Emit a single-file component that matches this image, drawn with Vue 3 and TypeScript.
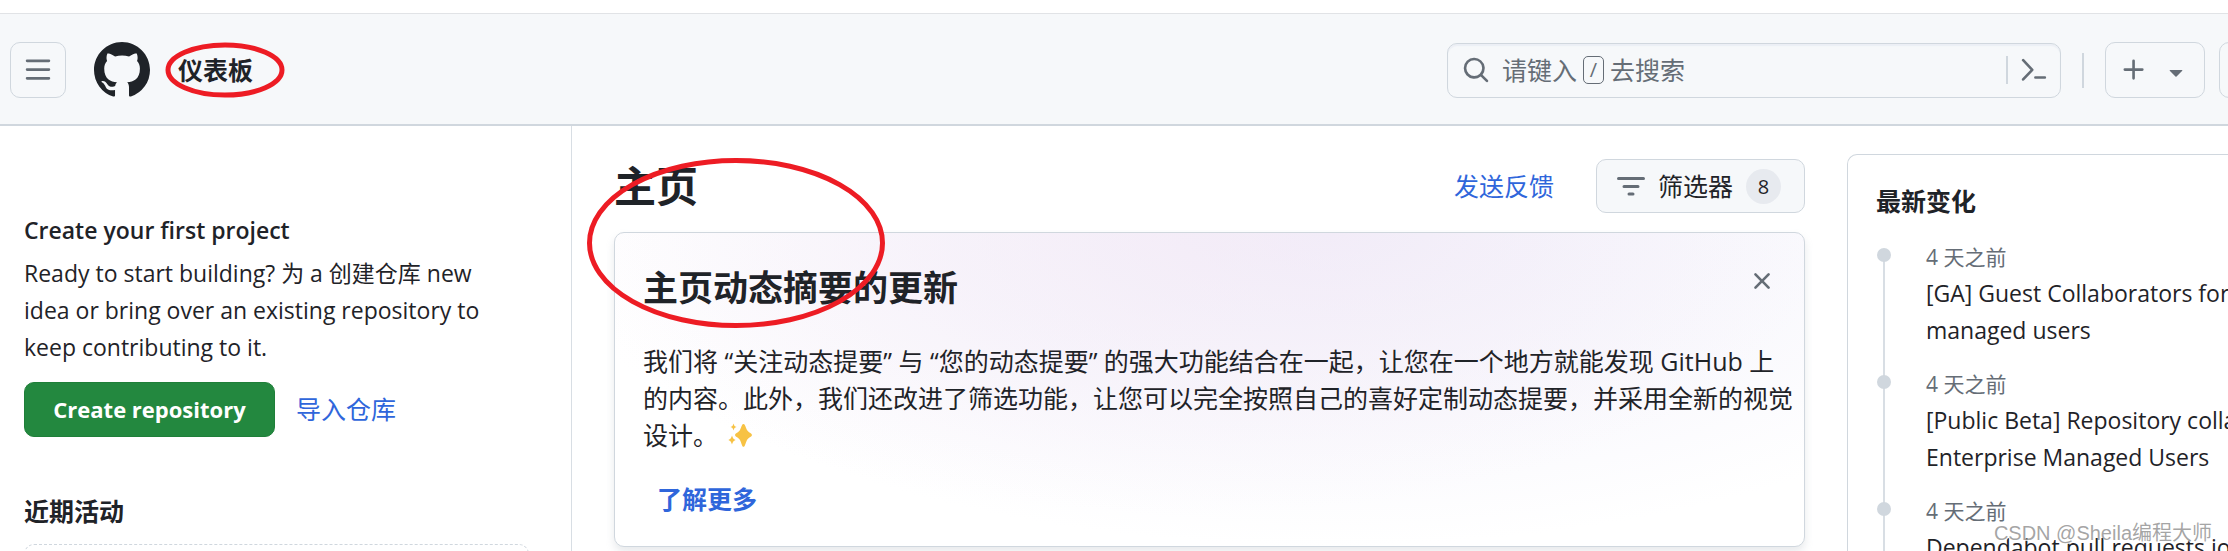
<script setup lang="ts">
interface Change {
  when: string
  lines: string[]
}

const changes: Change[] = [
  { when: '4 天之前', lines: ['[GA] Guest Collaborators for enterprise', 'managed users'] },
  { when: '4 天之前', lines: ['[Public Beta] Repository collaborators for', 'Enterprise Managed Users'] },
  { when: '4 天之前', lines: ['Dependabot pull requests jobs'] },
]
const filterCount = 8
</script>

<template>
  <div class="page">
    <header class="top">
      <button class="square" type="button" aria-label="菜单">
        <svg width="28" height="28" viewBox="0 0 16 16"><path fill="currentColor" d="M1 2.75A.75.75 0 0 1 1.75 2h12.5a.75.75 0 0 1 0 1.5H1.75A.75.75 0 0 1 1 2.75Zm0 5A.75.75 0 0 1 1.75 7h12.5a.75.75 0 0 1 0 1.5H1.75A.75.75 0 0 1 1 7.75ZM1.75 12h12.5a.75.75 0 0 1 0 1.5H1.75a.75.75 0 0 1 0-1.5Z" /></svg>
      </button>
      <a class="logo" href="#" aria-label="GitHub">
        <svg width="56" height="56" viewBox="0 0 16 16"><path fill="currentColor" d="M8 0c4.42 0 8 3.58 8 8a8.013 8.013 0 0 1-5.45 7.59c-.4.08-.55-.17-.55-.38 0-.27.01-1.13.01-2.2 0-.75-.25-1.23-.54-1.48 1.78-.2 3.65-.88 3.65-3.95 0-.88-.31-1.59-.82-2.15.08-.2.36-1.02-.08-2.12 0 0-.67-.22-2.2.82-.64-.18-1.32-.27-2-.27-.68 0-1.36.09-2 .27-1.53-1.03-2.2-.82-2.2-.82-.44 1.1-.16 1.92-.08 2.12-.51.56-.82 1.28-.82 2.15 0 3.06 1.86 3.75 3.64 3.95-.23.2-.44.55-.51 1.07-.46.21-1.61.55-2.33-.66-.15-.24-.6-.83-1.23-.82-.67.01-.27.38.01.53.34.19.73.9.82 1.13.16.45.68 1.31 2.69.94 0 .67.01 1.3.01 1.49 0 .21-.15.45-.55.38A7.995 7.995 0 0 1 0 8c0-4.42 3.58-8 8-8Z" /></svg>
      </a>
      <a class="context" href="#">仪表板
        <svg class="ring ring-small" viewBox="0 0 120 56"><ellipse cx="60" cy="28" rx="57" ry="25" /></svg>
      </a>
      <div class="search">
        <button class="search-main" type="button">
          <svg width="28" height="28" viewBox="0 0 16 16"><path fill="currentColor" d="M10.68 11.74a6 6 0 0 1-7.922-8.982 6 6 0 0 1 8.982 7.922l3.04 3.04a.749.749 0 0 1-.326 1.275.749.749 0 0 1-.734-.215ZM11.5 7a4.499 4.499 0 1 0-8.997 0A4.499 4.499 0 0 0 11.5 7Z" /></svg>
          <span class="hint">请键入 <kbd>/</kbd> 去搜索</span>
        </button>
        <button class="command" type="button" aria-label="命令面板">
          <svg width="28" height="28" viewBox="0 0 16 16" fill="none" stroke="currentColor" stroke-width="1.5" stroke-linecap="round" stroke-linejoin="round"><path d="M1.8 2.4 7 7.9l-5.2 5.5M8.8 12.3h5.4" /></svg>
        </button>
      </div>
      <span class="bar"></span>
      <button class="create" type="button" aria-label="新建">
        <svg width="28" height="28" viewBox="0 0 16 16"><path fill="currentColor" d="M7.75 2a.75.75 0 0 1 .75.75V7h4.25a.75.75 0 0 1 0 1.5H8.5v4.25a.75.75 0 0 1-1.5 0V8.5H2.75a.75.75 0 0 1 0-1.5H7V2.75A.75.75 0 0 1 7.75 2Z" /></svg>
        <svg width="28" height="28" viewBox="0 0 16 16"><path fill="currentColor" d="m4.427 8.427 3.396 3.396a.25.25 0 0 0 .354 0l3.396-3.396A.25.25 0 0 0 11.396 8H4.604a.25.25 0 0 0-.177.427Z" /></svg>
      </button>
      <button class="square issues" type="button" aria-label="议题"></button>
    </header>

    <div class="columns">
      <aside class="side">
        <h2 class="start">Create your first project</h2>
        <p class="intro">Ready to start building? 为 a 创建仓库 new idea or bring over an existing repository to keep contributing to it.</p>
        <div class="actions">
          <button class="primary" type="button">Create repository</button>
          <a href="#">导入仓库</a>
        </div>
        <h2 class="recent">近期活动</h2>
        <div class="empty"></div>
      </aside>

      <main class="feed">
        <div class="feed-head">
          <h1>主页</h1>
          <a href="#">发送反馈</a>
          <button class="filter" type="button">
            <svg width="28" height="28" viewBox="0 0 28 28" stroke="currentColor" stroke-width="3" stroke-linecap="round"><path d="M1.5 6.500h25M7 14.500h14M12 22h4" /></svg>
            <span>筛选器</span>
            <span class="count">{{ filterCount }}</span>
          </button>
        </div>
        <section class="notice">
          <svg class="ring ring-large" viewBox="0 0 298 170"><ellipse cx="149" cy="85" rx="146.500" ry="82.500" /></svg>
          <div class="notice-head">
            <h2>主页动态摘要的更新</h2>
            <button class="close" type="button" aria-label="关闭">
              <svg width="28" height="28" viewBox="0 0 16 16"><path fill="currentColor" d="M3.72 3.72a.75.75 0 0 1 1.06 0L8 6.94l3.220-3.220a.749.749 0 0 1 1.275.326.749.749 0 0 1-.215.734L9.060 8l3.220 3.220a.749.749 0 0 1-.326 1.275.749.749 0 0 1-.734-.215L8 9.060l-3.220 3.220a.751.751 0 0 1-1.042-.018.751.751 0 0 1-.018-1.042L6.940 8 3.720 4.780a.75.75 0 0 1 0-1.060Z" /></svg>
            </button>
          </div>
          <p>
            我们将 “关注动态提要” 与 “您的动态提要” 的强大功能结合在一起，让您在一个地方就能发现 GitHub 上<br>的内容。此外，我们还改进了筛选功能，让您可以完全按照自己的喜好定制动态提要，并采用全新的视觉<br>设计。
            <svg class="sparkle" width="26" height="26" viewBox="0 0 26 26" fill="#f7c244"><path d="M16 2c2-.8 2.500 3 4 6 1.200 2.400 5 3.300 5 5s-3.800 2.600-5 5c-1.500 3-2 6.800-3.500 6.800S14.500 21 13 18c-1.200-2.400-5-3.300-5-5s3.800-2.600 5-5c1.500-3 1.800-5.500 3-6ZM6.500 1.500c.8 2.500 1 2.800 3 3.500-2 .7-2.200 1-3 3.500-.8-2.500-1-2.800-3-3.500 2-.7 2.200-1 3-3.500ZM5 13.500c1 3 1.500 3.500 3.800 4.500C6.500 19 6 19.500 5 22.500 4 19.500 3.500 19 1.200 18 3.500 17 4 16.500 5 13.500Z" /></svg>
          </p>
          <a class="more" href="#">了解更多</a>
        </section>
      </main>

      <aside class="latest">
        <h2>最新变化</h2>
        <ol>
          <li v-for="(c, i) in changes" :key="i">
            <time>{{ c.when }}</time>
            <a href="#"><span v-for="l in c.lines" :key="l">{{ l }}</span></a>
          </li>
        </ol>
      </aside>
    </div>
    <div class="watermark">CSDN @Sheila编程大师</div>
  </div>
</template>

<style>
body {
  margin: 0;
  background: #fff;
}
</style>

<style scoped>
.page {
  position: relative;
  height: 100vh;
  overflow: hidden;
  box-sizing: border-box;
  padding-top: 13px;
  color: #1f2328;
  font: 25px/37px "Open Sans", "Noto Sans CJK SC", sans-serif;
}
.page * {
  box-sizing: border-box;
}
svg {
  display: block;
  flex: none;
}
h1, h2, p, ol {
  margin: 0;
  padding: 0;
}
h2 {
  font-size: 25px;
  font-weight: 700;
}
a {
  color: #2f66db;
  text-decoration: none;
}
button {
  display: flex;
  align-items: center;
  flex: none;
  margin: 0;
  padding: 0;
  border: 0;
  background: none;
  color: inherit;
  font: inherit;
}
.top {
  display: flex;
  align-items: center;
  height: 113px;
  padding: 2px 0 0 10px;
  border-top: 1px solid #e1e3e6;
  border-bottom: 2px solid #d0d7de;
  background: #f6f8fa;
  color: #656d76;
}
.square {
  justify-content: center;
  width: 56px;
  height: 56px;
  border: 1px solid #d0d7de;
  border-radius: 10px;
}
.logo {
  margin: 0 28px;
  color: #1f2328;
}
.context {
  position: relative;
  margin-right: auto;
  color: #1f2328;
  font-weight: 700;
}
.ring {
  position: absolute;
  fill: none;
  stroke: #ed1c24;
  stroke-width: 5px;
}
.ring-small {
  top: -10px;
  left: -13px;
  width: 120px;
  height: 56px;
}
.search {
  display: flex;
  align-items: center;
  flex: 0 1 614px;
  height: 55px;
  border: 1px solid #d0d7de;
  border-radius: 10px;
  box-shadow: inset 0 2px 1px #eceff5;
}
.search-main {
  flex: 1;
  gap: 12px;
  padding-left: 14px;
}
.hint {
  display: flex;
  align-items: center;
  gap: 6px;
}
kbd {
  width: 21px;
  height: 28px;
  border: 1px solid #656d76;
  border-radius: 5px;
  font: 20px/26px "Open Sans", sans-serif;
  text-align: center;
}
.command {
  width: 54px;
  height: 28px;
  padding-left: 12px;
  border-left: 2px solid #d0d7de;
}
.bar {
  width: 2px;
  height: 35px;
  margin: 0 21px;
  background: #d0d7de;
}
.create {
  gap: 14px;
  width: 100px;
  height: 56px;
  padding-left: 14px;
  border: 1px solid #d0d7de;
  border-radius: 10px;
}
.issues {
  margin-left: 14px;
  margin-right: -47px;
}
.columns {
  display: grid;
  grid-template-columns: 572px minmax(0, 1fr) 381px;
  height: 100%;
}
.side {
  padding: 86px 42px 0 24px;
  border-right: 1px solid #d8dee4;
}
.start {
  font-size: 23px;
  font-weight: 600;
}
.intro {
  margin-top: 6px;
  padding-right: 36px;
  font-size: 23px;
}
.actions {
  display: flex;
  align-items: center;
  gap: 21px;
  margin-top: 16px;
}
.primary {
  justify-content: center;
  width: 251px;
  height: 55px;
  border: 1px solid #1f7f39;
  border-radius: 10px;
  background: #23883f;
  color: #fff;
  font-size: 22px;
  font-weight: 700;
}
.recent {
  margin-top: 56px;
}
.empty {
  height: 80px;
  margin-top: 14px;
  border: 1px dashed #d0d7de;
  border-radius: 10px;
}
.feed {
  padding: 33px 42px 0;
}
.feed-head {
  display: flex;
  align-items: center;
  gap: 42px;
  height: 54px;
}
h1 {
  margin-right: auto;
  font-size: 42px;
  line-height: 54px;
}
.filter {
  gap: 13px;
  width: 209px;
  height: 54px;
  padding-left: 20px;
  border: 1px solid #d0d7de;
  border-radius: 10px;
  background: #f6f8fa;
}
.filter svg {
  color: #656d76;
}
.count {
  width: 35px;
  height: 35px;
  border-radius: 18px;
  background: #e7eaef;
  font-size: 20px;
  line-height: 35px;
  text-align: center;
}
.notice {
  position: relative;
  height: 315px;
  margin-top: 19px;
  padding: 28px;
  border: 1px solid #d0d7de;
  border-radius: 10px;
  background:
    radial-gradient(ellipse 54% 90% at 48% 0, #f5e8f588, #f5e8f500),
    radial-gradient(ellipse 64% 100% at 60% 0, #f0effa, #f0effa00),
    #fff;
  box-shadow: 0 5px 8px #8c959f33;
}
.ring-large {
  top: -75px;
  left: -28px;
  width: 298px;
  height: 170px;
}
.notice-head {
  display: flex;
  justify-content: space-between;
}
.notice h2 {
  font-size: 35px;
  line-height: 54px;
}
.close {
  align-self: flex-start;
  margin: 6px 0 0;
  color: #656d76;
}
.notice p {
  margin-top: 28px;
  white-space: nowrap;
}
.sparkle {
  display: inline-block;
  margin-left: 2px;
  vertical-align: -3px;
}
.more {
  display: inline-block;
  margin: 27px 14px 0;
  font-weight: 700;
}
.latest {
  margin-top: 28px;
  padding: 28px 0 0 28px;
  border: 1px solid #d0d7de;
  border-right: 0;
  border-radius: 10px 0 0 0;
  overflow: hidden;
}
ol {
  margin-top: 20px;
  list-style: none;
}
li {
  position: relative;
  height: 127px;
  padding-left: 50px;
}
li::before {
  content: "";
  position: absolute;
  top: 16px;
  left: 7px;
  width: 2px;
  height: 127px;
  background: #d8dee4;
}
li::after {
  content: "";
  position: absolute;
  top: 8px;
  left: 1px;
  width: 14px;
  height: 14px;
  border-radius: 50%;
  background: #d0d7de;
}
time {
  display: block;
  color: #656d76;
  font-size: 21px;
  line-height: 35px;
}
li a {
  color: #1f2328;
  font-size: 23px;
}
li a span {
  display: block;
  white-space: nowrap;
}
.watermark {
  position: absolute;
  right: 16px;
  bottom: 3px;
  color: #777a;
  font-family: "Liberation Sans", "Noto Sans CJK SC", sans-serif;
  font-size: 20px;
  line-height: 30px;
  text-shadow: 1px 1px #fffc;
}
</style>
